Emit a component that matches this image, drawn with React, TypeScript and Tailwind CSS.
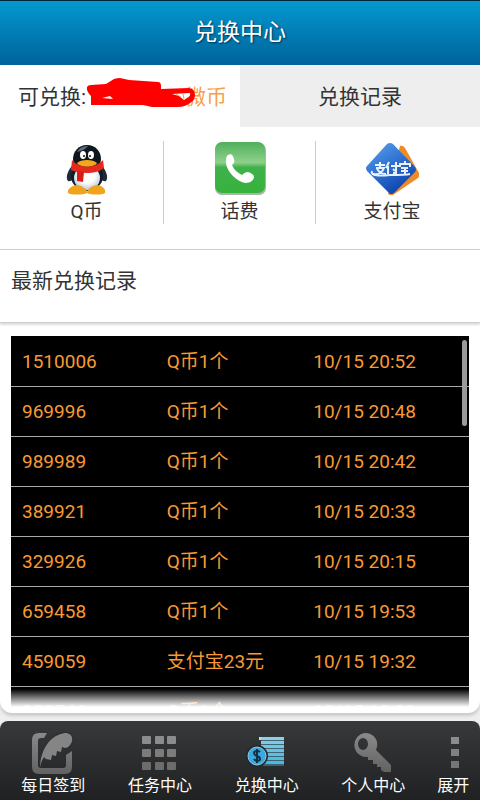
import React from "react";

const records = [
  ["1510006", "Q币1个", "10/15 20:52"],
  ["969996", "Q币1个", "10/15 20:48"],
  ["989989", "Q币1个", "10/15 20:42"],
  ["389921", "Q币1个", "10/15 20:33"],
  ["329926", "Q币1个", "10/15 20:15"],
  ["659458", "Q币1个", "10/15 19:53"],
  ["459059", "支付宝23元", "10/15 19:32"],
  ["359546", "Q币1个", "10/15 19:29"],
];

function Penguin() {
  return (
    <svg viewBox="0 0 54 54" className="h-[54px] w-[54px] shrink-0" aria-hidden="true">
      <defs>
        <radialGradient id="belly" cx="50%" cy="40%" r="60%">
          <stop offset="0.5" stopColor="#ffffff" />
          <stop offset="1" stopColor="#bfc8d4" />
        </radialGradient>
      </defs>
      <path d="M14 23C8 28 5 37 8 40c3 1 6-2 9-6zM40 23c6 5 9 14 6 17-3 1-6-2-9-6z" fill="#1d2a38" />
      <ellipse cx="27" cy="35" rx="16" ry="15" fill="#141c26" />
      <ellipse cx="27" cy="37" rx="13" ry="12" fill="url(#belly)" />
      <path d="M27 4c-9 0-14 7-14 14 0 6 5 11 14 11s14-5 14-11c0-7-5-14-14-14z" fill="#10161e" />
      <path d="M17 11c2-4 6-6 11-6-2 3-6 5-11 6z" fill="#5c6c7c" />
      <ellipse cx="23" cy="14" rx="3" ry="4" fill="#fff" />
      <ellipse cx="31" cy="14" rx="3" ry="4" fill="#fff" />
      <circle cx="24" cy="15" r="1" fill="#111" />
      <circle cx="30" cy="15" r="1" fill="#111" />
      <path d="M17 22c4-4 16-4 20 0-3 5-17 5-20 0z" fill="#f5a71c" />
      <path d="M12 19c7 9 23 9 31 0l1 8c-5 4-11 5-17 5s-12-1-16-3z" fill="#e5291f" />
      <path d="M17 29l7 2-1 10-6-1z" fill="#d91c18" />
      <path d="M17 44c-6 1-10 4-9 8 3 2 15 2 19 0 0-4-4-7-10-8zM37 44c-6 1-10 4-10 8 4 2 15 2 18 0 1-4-2-7-8-8z" fill="#f0a41b" />
    </svg>
  );
}

function Phone() {
  return (
    <svg viewBox="0 0 54 54" className="h-[54px] w-[54px] shrink-0" aria-hidden="true">
      <defs>
        <linearGradient id="green" x1="0" y1="0" x2="0" y2="1">
          <stop offset="0" stopColor="#4fb05a" />
          <stop offset="0.4" stopColor="#8fd08c" />
          <stop offset="0.5" stopColor="#3fb14a" />
          <stop offset="1" stopColor="#37b23c" />
        </linearGradient>
      </defs>
      <rect x="2" y="2" width="51" height="52" rx="7" fill="#a9b5a9" />
      <rect x="2" y="1" width="50" height="51" rx="7" fill="url(#green)" />
      <path d="M15 14c3-2 5 0 6 4 1 3 0 4-2 6 2 5 6 8 10 10 2-2 4-3 6-3 4 1 6 3 6 5 0 3-4 6-8 6-9-1-19-11-20-20 0-4 0-7 2-8z" fill="#fff" />
    </svg>
  );
}

function Alipay() {
  return (
    <svg viewBox="0 0 54 54" className="h-[54px] w-[54px] shrink-0" aria-hidden="true">
      <defs>
        <linearGradient id="blue" x1="0" y1="0" x2="0.6" y2="1">
          <stop offset="0" stopColor="#62a5ed" />
          <stop offset="0.45" stopColor="#3478d6" />
          <stop offset="1" stopColor="#0d43ae" />
        </linearGradient>
      </defs>
      <path d="M35 5q3-1 5 2l14 25q1 3-1 5L28 54q-3 1-5-1z" fill="#ef8a25" />
      <path d="M22 3q3-2 6 0l22 23q2 3 0 5L29 52q-3 2-5 0L2 30q-2-3 0-5z" fill="url(#blue)" />
      <g fill="none" stroke="#fff" strokeWidth="2" opacity="0.9">
        <path d="M10 24h10M15 21v6M11 27h8c-2 5-6 7-11 6M12 28c2 3 5 5 9 5M24 21l-3 6M23 25v8M26 25h8M31 21v11l-3 0M28 28l2 2M35 26v-3h10v3M40 20v3M36 27h7M36 30h7M40 27v6" />
        <path d="M7 30c-2 5 8 5 18 4 10 0 16 0 20-1" />
      </g>
    </svg>
  );
}

function IconGradient({ id }: { id: string }) {
  return (
    <defs>
      <linearGradient id={id} x1="0" y1="0" x2="0" y2="1">
        <stop offset="0" stopColor="#8a8a8a" />
        <stop offset="1" stopColor="#626263" />
      </linearGradient>
    </defs>
  );
}

function Feather() {
  return (
    <svg viewBox="1 0 42 42" className="h-[42px] w-[42px]" aria-hidden="true">
      <IconGradient id="g1" />
      <path d="M16 1H8Q1 1 1 8v27q0 7 7 7h26q7 0 7-7V19l-6 4v10q0 3-3 3H10q-3 0-3-3V9q0-3 3-3h3z" fill="url(#g1)" />
      <path d="M9 35C10 17 19 3 34 1c5 0 8 3 7 8-1 4-4 7-7 7l-3-1-1 5-4-1-1 5-4-1-1 5-5-1-2-2c-2 3-3 6-4 10z" fill="#2d2f31" stroke="#2d2f31" strokeWidth="3" />
      <path d="M9 35C10 17 19 3 34 1c5 0 8 3 7 8-1 4-4 7-7 7l-3-1-1 5-4-1-1 5-4-1-1 5-5-1-2-2c-2 3-3 6-4 10z" fill="#858585" />
    </svg>
  );
}

function GridIcon() {
  return (
    <svg viewBox="1 0 42 42" className="h-[42px] w-[42px]" aria-hidden="true">
      {[4, 17, 30].map((y, r) =>
        [4, 17, 29].map((x) => (
          <rect key={`${x}-${y}`} x={x} y={y} width="9" height="8" rx="1" fill={["#8c8c8c", "#7c7c7c", "#6c6c6c"][r]} />
        ))
      )}
    </svg>
  );
}

function Coins() {
  return (
    <svg viewBox="1 0 42 42" className="h-[42px] w-[42px]" aria-hidden="true">
      {["#b9deef", "#a6d6ea", "#90cce6", "#7ec5e2", "#6cc0df", "#5bbbdc", "#4db8db"].map((c, i) => (
        <rect key={c} x={i < 1 ? 14 : 16} y={5 + i * 4} width={i < 1 ? 25 : 23} height="3" fill={c} />
      ))}
      <rect x="16" y="5" width="23" height="29" fill="#4db8db" opacity="0.4" />
      <circle cx="12" cy="24" r="11" fill="#24282b" />
      <circle cx="12" cy="24" r="9" fill="#3ba9df" stroke="#83cbea" strokeWidth="1" />
      <path d="M15 20c-2-2-6-1-6 1 0 4 6 2 6 6 0 2-4 3-6 0M12 17v14" fill="none" stroke="#172f42" strokeWidth="2" />
    </svg>
  );
}

function Key() {
  return (
    <svg viewBox="0 0 42 42" className="h-[42px] w-[42px]" aria-hidden="true">
      <IconGradient id="g2" />
      <path fillRule="evenodd" d="M13 1a12 12 0 1 0 3 24v3h5v4h4v3h4v3l3 2h7v-7L24 18C28 9 22 1 13 1zM11 6a5 6 0 1 1 0 12 5 6 0 1 1 0-12z" fill="url(#g2)" />
    </svg>
  );
}

function More() {
  return (
    <svg viewBox="0 0 42 42" className="h-[42px] w-[42px]" aria-hidden="true">
      <rect x="19" y="5" width="8" height="7" fill="#8c8c8c" />
      <rect x="19" y="17" width="8" height="7" fill="#808080" />
      <rect x="19" y="29" width="8" height="7" fill="#757575" />
    </svg>
  );
}

const methods = [
  { name: "Q币", icon: <Penguin /> },
  { name: "话费", icon: <Phone /> },
  { name: "支付宝", icon: <Alipay /> },
];

const navItems = [
  { name: "每日签到", icon: <Feather /> },
  { name: "任务中心", icon: <GridIcon /> },
  { name: "兑换中心", icon: <Coins /> },
  { name: "个人中心", icon: <Key /> },
];

export default function App() {
  return (
    <div className="flex h-screen flex-col bg-[#eee] font-['Roboto','Noto_Sans_CJK_SC',sans-serif] text-[#333]">
      <header className="flex h-[65px] shrink-0 items-center justify-center border-t border-[#06253c] bg-linear-to-b from-[#0499d0] to-[#00639a]">
        <h1 className="text-[23px] leading-8 text-white [text-shadow:1px_1px_2px_#00304e]">兑换中心</h1>
      </header>

      <div className="grid h-[62px] shrink-0 grid-cols-2 text-[21px] leading-8">
        <button className="relative flex items-center bg-white pt-[2px] pl-[18px]">
          <span>可兑换:</span>
          <span className="ml-auto pr-[13px] text-[#f7a04a]">微币</span>
          <svg viewBox="0 0 112 32" className="absolute top-[12px] left-[86px] h-8 w-[112px]" aria-hidden="true">
            <path d="M1 10q1-2 4-2l15-1 8-5q3-1 6-1l9 2 29 2q3 0 3 4v3l28-1q6 1 6 7 0 5-5 8-5 4-12 4H66l-9-2H5V19Q0 14 1 10z" fill="#f00" />
            <path d="M86 17l18-1q1 3-3 5l-3 2-5-4z" fill="#fff" />
            <path d="M90 17l5 3M97 17l1 5" stroke="#f7a04a" strokeWidth="1" />
            <path d="M16 21l8-2 3 3z" fill="#fff" />
          </svg>
        </button>
        <button className="bg-[#eee] pt-[2px]">兑换记录</button>
      </div>

      <section className="grid h-[123px] shrink-0 grid-cols-[164fr_152fr_164fr] border-b border-[#ccc] bg-white pt-[14px]">
        {methods.map((m, i) => (
          <button
            key={m.name}
            className={`flex h-[83px] flex-col items-center gap-[5px] ${i < 2 ? "border-r border-[#ccc]" : ""} ${i === 0 ? "pl-[10px]" : ""} ${i === 2 ? "pr-[12px]" : ""}`}
          >
            {m.icon}
            <span className="text-[19px] leading-6">{m.name}</span>
          </button>
        ))}
      </section>

      <h2 className="relative z-10 h-[73px] shrink-0 border-b border-[#ccc] bg-white px-[11px] pt-[15px] text-[21px] leading-8 shadow-[0_2px_2px_#ddd]">
        最新兑换记录
      </h2>

      <main className="flex min-h-0 flex-1 flex-col rounded-b-xl bg-white px-[11px] pt-[13px] pb-[6px] shadow-[0_3px_3px_#ccc]">
        <div className="relative min-h-0 flex-1 overflow-hidden bg-black">
          <table className="w-full table-fixed border-collapse text-left text-[19px] leading-6 text-[#f79a35]">
            <colgroup>
              <col className="w-[34%]" />
              <col className="w-[32%]" />
              <col className="w-[34%]" />
            </colgroup>
            <tbody>
              {records.map((r) => (
                <tr key={r[0]} className="h-[50px] border-b border-[#aaa]">
                  <td className="pt-[2px] pl-[11px]">{r[0]}</td>
                  <td className="pt-[2px]">{r[1]}</td>
                  <td className="pt-[2px]">{r[2]}</td>
                </tr>
              ))}
            </tbody>
          </table>
          <div className="absolute top-[4px] right-[2px] h-[86px] w-[5px] rounded-full bg-[#999]" />
          <div className="absolute inset-x-0 bottom-0 h-[18px] bg-linear-to-b from-transparent to-white" />
        </div>
      </main>

      <nav className="mt-[8px] flex h-[79px] shrink-0 rounded-t-lg bg-linear-to-b from-[#37393b] to-[#202123] text-base leading-6 text-white">
        {navItems.map((n) => (
          <button key={n.name} className="flex flex-[2] flex-col items-center pt-[11px] whitespace-nowrap">
            {n.icon}
            <span>{n.name}</span>
          </button>
        ))}
        <button className="flex flex-1 flex-col items-center pt-[11px] whitespace-nowrap">
          <More />
          <span>展开</span>
        </button>
      </nav>
    </div>
  );
}
